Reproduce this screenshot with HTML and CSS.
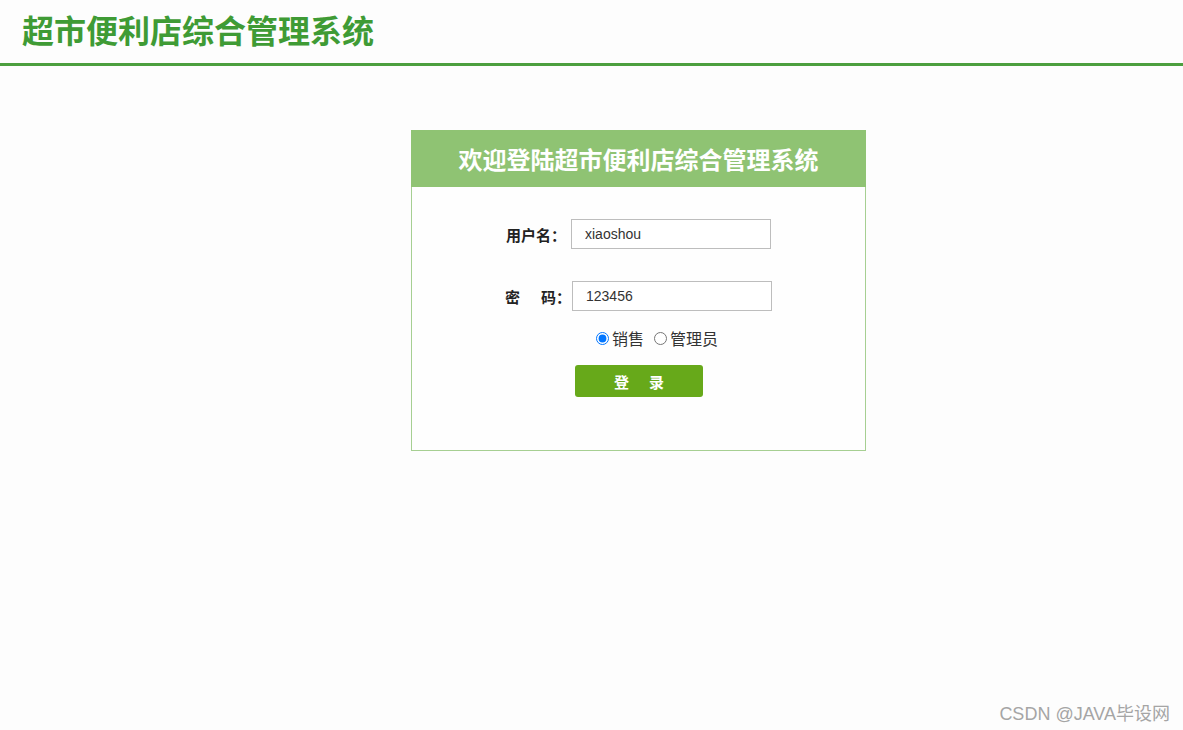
FILE: index.html
```html
<!DOCTYPE html>
<html lang="zh-CN">
<head>
<meta charset="utf-8">
<title>超市便利店综合管理系统</title>
<link rel="stylesheet" href="styles.css">
</head>
<body>
<header class="top">
  <h1 class="brand">超市便利店综合管理系统</h1>
</header>
<main class="login">
  <div class="login-head">欢迎登陆超市便利店综合管理系统</div>
  <form class="login-body">
    <div class="row">
      <label class="label">用户名：</label>
      <input class="field" type="text" value="xiaoshou">
    </div>
    <div class="row row-pwd">
      <label class="label">密<span class="sp"></span>码：</label>
      <input class="field" type="text" value="123456">
    </div>
    <div class="roles">
      <label class="role"><input type="radio" name="role" checked>销售</label>
      <label class="role"><input type="radio" name="role">管理员</label>
    </div>
    <button class="btn" type="button">登<span class="bsp"></span>录</button>
  </form>
</main>
<div class="watermark">CSDN @JAVA毕设网</div>
</body>
</html>
```
FILE: styles.css
```css
html, body {
  margin: 0;
  padding: 0;
}
body {
  background: #fdfdfd;
  font-family: "Noto Sans CJK SC", "Liberation Sans", sans-serif;
  color: #333;
  width: 1183px;
  height: 730px;
  overflow: hidden;
  position: relative;
}
.top {
  height: 63px;
  border-bottom: 3px solid #4c9f3f;
  box-sizing: content-box;
}
.brand {
  margin: 0;
  padding: 9px 0 0 22px;
  font-size: 32px;
  line-height: 40px;
  font-weight: 700;
  color: #3f9b35;
  letter-spacing: 0;
}
.login {
  margin: 64px 0 0 411px;
  width: 453px;
  border: 1px solid #a6cf92;
  background: #fefefe;
}
.login-head {
  height: 57px;
  line-height: 57px;
  background: #8fc373;
  color: #fff;
  text-align: center;
  font-size: 24px;
  font-weight: 700;
  margin: -1px -1px 0 -1px;
}
.login-body {
  display: flex;
  flex-direction: column;
  align-items: flex-start;
  padding: 32px 0 53px 0;
  margin: 0;
}
.row {
  display: flex;
  align-items: center;
  margin-left: 94px;
  height: 30px;
}
.row-pwd {
  margin-top: 32px;
  margin-left: 93px;
}
.label {
  font-size: 15px;
  font-weight: 700;
  color: #222;
  width: 65px;
  white-space: nowrap;
}
.row-pwd .label {
  width: 67px;
}
.sp {
  display: inline-block;
  width: 21px;
}
.field {
  box-sizing: border-box;
  width: 200px;
  height: 30px;
  border: 1px solid #bdbdbd;
  padding: 0 0 0 13px;
  font-family: "Liberation Sans", Arial, sans-serif;
  font-size: 14px;
  color: #333;
  background: #fff;
  outline: none;
}
.roles {
  display: flex;
  align-items: center;
  margin: 16px 0 0 183px;
  height: 22px;
  font-size: 16px;
  color: #333;
}
.role {
  display: flex;
  align-items: center;
  margin-right: 9px;
}
.role input {
  margin: 0 3px 0 1px;
  width: 13px;
  height: 13px;
}
.btn {
  margin: 16px 0 0 163px;
  width: 128px;
  height: 32px;
  border: none;
  border-radius: 3px;
  background: #67a91a;
  color: #fff;
  font-family: "Noto Sans CJK SC", sans-serif;
  font-size: 15px;
  font-weight: 700;
  padding: 0;
  cursor: pointer;
}
.bsp {
  display: inline-block;
  width: 20px;
}
.watermark {
  position: absolute;
  right: 13px;
  bottom: 5px;
  font-family: "Liberation Sans", "Noto Sans CJK SC", sans-serif;
  font-size: 18px;
  color: #a5a5a5;
}
```
